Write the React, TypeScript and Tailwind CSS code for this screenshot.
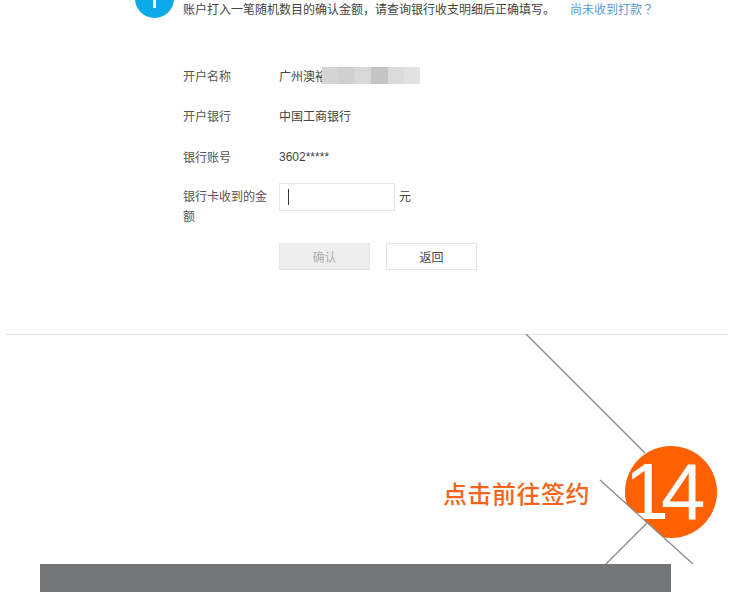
import React from 'react';

const blurBlocks = ['bg-[#d4d4d4]', 'bg-[#d0d0d0]', 'bg-[#d8d8d8]', 'bg-[#c4c4c4]', 'bg-[#dbdbdb]', 'bg-[#e2e2e2]'];

const FormRow = ({ label, children, className }: { label: string; children: React.ReactNode; className: string }) => (
  <div className={`flex items-center pl-[183px] ${className}`}>
    <div className="w-[96px] text-[#555]">{label}</div>
    {children}
  </div>
);

export default function App() {
  return (
    <div className="relative w-[734px] h-[592px] overflow-hidden bg-white text-[12px] leading-[20px] text-[#444] font-['Noto_Sans_CJK_SC','Liberation_Sans',sans-serif]">
      {/* notice, the top is cut off by the page edge */}
      <div className="flex items-start pl-[135px] -mt-[21px] h-[39px]">
        <div className="flex justify-center w-[39px] h-[39px] rounded-full bg-[#0aa9e8]">
          <div className="w-[3px] h-[8px] mt-[21px] bg-white" />
        </div>
        <div className="ml-[9px] mt-[20px] w-[387px] whitespace-nowrap text-[#444]">
          账户打入一笔随机数目的确认金额，请查询银行收支明细后正确填写。
        </div>
        <div className="mt-[20px] text-[#5b9bd5] whitespace-nowrap">
          尚未收到打款<span className="font-['Noto_Sans_CJK_TC',sans-serif]">？</span>
        </div>
      </div>

      <FormRow label="开户名称" className="mt-[48px] h-[20px]">
        <div className="relative w-[141px]">
          <span className="text-[#444]">广州澳裕</span>
          <div className="absolute left-[43px] top-[1px] flex h-[17px]">
            {blurBlocks.map(c => (
              <div key={c} className={`w-[16.4px] h-full ${c}`} />
            ))}
          </div>
        </div>
      </FormRow>

      <FormRow label="开户银行" className="mt-[20px] h-[20px]">
        <div>中国工商银行</div>
      </FormRow>

      <FormRow label="银行账号" className="mt-[21px] h-[20px]">
        <div className="font-['Liberation_Sans',sans-serif]">3602*****</div>
      </FormRow>

      <div className="flex items-start pl-[183px] mt-[16px]">
        <div className="w-[96px] pr-[6px] pt-[3px] leading-[20px] text-[#555]">银行卡收到的金额</div>
        <div className="flex items-center w-[116px] h-[28px] border border-[#e8e8e8] pl-[8px]">
          <div className="w-px h-[16px] bg-[#333]" />
        </div>
        <div className="ml-[4px] mt-[3px]">元</div>
      </div>

      <div className="flex pl-[279px] mt-[17px]">
        <div className="flex items-center justify-center w-[91px] h-[27px] bg-[#eeeeee] border border-[#e6e6e6] text-[#b0b0b0]">
          确认
        </div>
        <div className="flex items-center justify-center ml-[16px] w-[91px] h-[27px] bg-white border border-[#e4e4e4] text-[#444]">
          返回
        </div>
      </div>

      <div className="ml-[5px] mt-[64px] w-[723px] h-px bg-[#e3e3e3]" />

      {/* step 14 */}
      <div className="flex items-center mt-[111px] h-[92px]">
        <div className="ml-[443px] w-[182px] text-[24px] leading-[32px] tracking-[0.5px] font-medium text-[#f8641a] mt-[2px] whitespace-nowrap">
          点击前往签约
        </div>
        <div className="flex items-center justify-center w-[92px] h-[92px] pr-[20px] rounded-full bg-[#ff6000] text-white text-[80px] leading-none tracking-[-8px] font-['Liberation_Sans',sans-serif]">
          14
        </div>
      </div>

      <div className="ml-[40px] mt-[26px] w-[631px] h-[28px] bg-[#747576]" />

      {/* diagonal rules, the lower one cuts a white corner off the circle */}
      <svg className="absolute left-0 top-0 pointer-events-none" width="734" height="592" fill="none" stroke="#8a8a8a" strokeWidth="1.3">
        <path d="M600 480L693 564H600Z" fill="#fff" stroke="none" />
        <path d="M526 334L645 453" />
        <path d="M600 480L693 564" />
        <path d="M647 523L606 564" />
      </svg>
    </div>
  );
}
